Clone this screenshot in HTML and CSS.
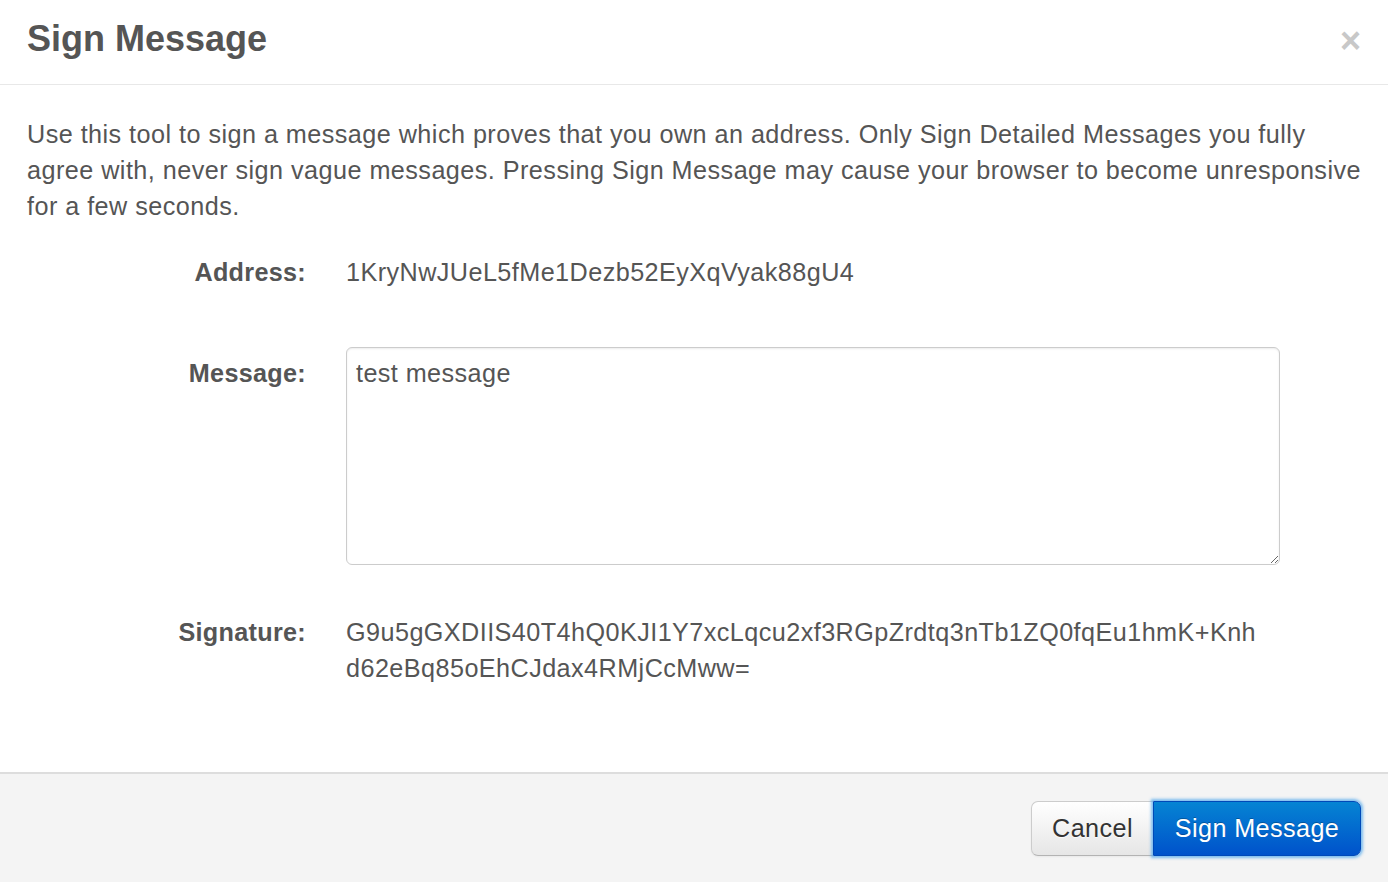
FILE: index.html
```html
<!DOCTYPE html>
<html>
<head>
<meta charset="utf-8">
<title>Sign Message</title>
<link rel="stylesheet" href="styles.css">
</head>
<body>
<div class="modal">
  <div class="modal-header">
    <h3 class="title">Sign Message</h3>
    <button class="close" type="button">×</button>
  </div>
  <div class="modal-body">
    <p class="intro">Use this tool to sign a message which proves that you own an address. Only Sign Detailed Messages you fully agree with, never sign vague messages. Pressing Sign Message may cause your browser to become unresponsive for a few seconds.</p>
    <div class="form">
      <div class="row row-address">
        <label class="label">Address:</label>
        <div class="value">1KryNwJUeL5fMe1Dezb52EyXqVyak88gU4</div>
      </div>
      <div class="row row-message">
        <label class="label label-pad">Message:</label>
        <div class="value"><textarea class="textarea">test message</textarea></div>
      </div>
      <div class="row row-signature">
        <label class="label">Signature:</label>
        <div class="value sig">G9u5gGXDIIS40T4hQ0KJI1Y7xcLqcu2xf3RGpZrdtq3nTb1ZQ0fqEu1hmK+Knh d62eBq85oEhCJdax4RMjCcMww=</div>
      </div>
    </div>
  </div>
  <div class="modal-footer">
    <div class="btn-group">
      <button class="btn btn-cancel" type="button">Cancel</button>
      <button class="btn btn-primary" type="button">Sign Message</button>
    </div>
  </div>
</div>
</body>
</html>
```
FILE: styles.css
```css
html, body {
  margin: 0;
  padding: 0;
  background: #ffffff;
}
body {
  font-family: "Liberation Sans", Arial, Helvetica, sans-serif;
  font-size: 25.2px;
  line-height: 36px;
  color: #555555;
}
.modal {
  width: 1388px;
  height: 882px;
  display: flex;
  flex-direction: column;
  background: #fff;
}
.modal-header {
  box-sizing: border-box;
  border-bottom: 1px solid #e8e8e8;
  padding: 0 27px;
  display: flex;
  align-items: center;
  justify-content: space-between;
  flex: none;
  height: 85px;
}
.title {
  margin: 0;
  font-size: 36px;
  font-weight: bold;
  line-height: 40px;
  color: #555;
  padding-bottom: 6px;
}
.close {
  border: 0;
  background: transparent;
  padding: 0;
  margin: 0 0 2px 0;
  font-family: "Liberation Sans", Arial, sans-serif;
  font-size: 36px;
  font-weight: bold;
  line-height: 36px;
  color: #c8c8c8;
  cursor: pointer;
}
.modal-body {
  flex: 1;
  padding: 31px 24px 0 27px;
}
.intro {
  margin: 0;
  letter-spacing: 0.46px;
}
.form {
  margin-top: 30px;
}
.row {
  display: grid;
  grid-template-columns: 279px 1fr;
  column-gap: 40px;
}
.label {
  font-weight: bold;
  text-align: right;
  color: #555;
  letter-spacing: 0.3px;
}
.label-pad {
  padding-top: 8px;
}
.row-message {
  margin-top: 57px;
}
.row-signature {
  margin-top: 49px;
}
.value {
  color: #555;
  letter-spacing: 0.44px;
}
.sig {
  width: 930px;
}
.textarea {
  display: block;
  box-sizing: border-box;
  width: 934px;
  height: 218px;
  margin: 0;
  padding: 7px 9px;
  border: 1px solid #cccccc;
  border-radius: 6px;
  box-shadow: inset 0 1px 2px rgba(0,0,0,0.08);
  font-family: "Liberation Sans", Arial, sans-serif;
  font-size: 25.2px;
  line-height: 36px;
  letter-spacing: 0.42px;
  color: #555;
  resize: both;
  outline: none;
}
.modal-footer {
  flex: none;
  height: 110px;
  box-sizing: border-box;
  border-top: 2px solid #dddddd;
  background: #f4f4f4;
  display: flex;
  align-items: center;
  justify-content: flex-end;
  padding: 0 27px 0 27px;
}
.btn-group {
  display: flex;
}
.btn {
  font-family: "Liberation Sans", Arial, sans-serif;
  font-size: 25.2px;
  line-height: 36px;
  letter-spacing: 0.4px;
  height: 55px;
  box-sizing: border-box;
  margin: 0;
  cursor: pointer;
}
.btn-cancel {
  width: 122px;
  color: #333;
  background: linear-gradient(#ffffff, #e6e6e6);
  border: 1px solid #cccccc;
  border-bottom-color: #b3b3b3;
  border-right: 0;
  border-radius: 7px 0 0 7px;
  box-shadow: inset 0 1px 0 rgba(255,255,255,.2), 0 1px 2px rgba(0,0,0,.05);
  text-shadow: 0 1px 1px rgba(255,255,255,.75);
}
.btn-primary {
  width: 208px;
  color: #fff;
  background: linear-gradient(#0584d3, #0052cb);
  border: 1px solid #0049b8;
  border-radius: 0 7px 7px 0;
  box-shadow: 0 0 3px 2px rgba(82,168,236,.75);
  text-shadow: 0 -1px 0 rgba(0,0,0,.25);
}
```
